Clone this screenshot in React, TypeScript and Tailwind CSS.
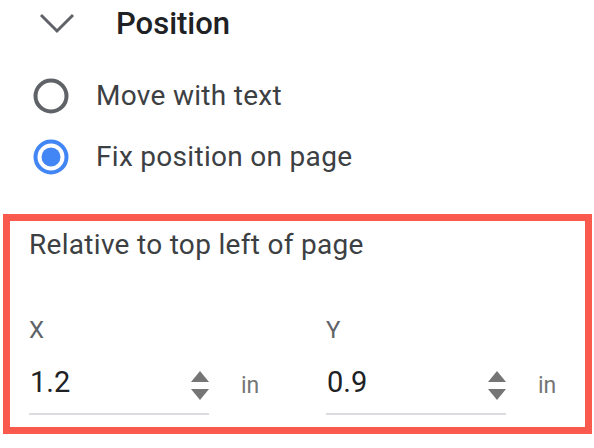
import React, { useState } from 'react';

function Radio({ checked }: { checked: boolean }) {
  return (
    <svg width="36" height="36" viewBox="0 0 36 36" className="shrink-0">
      <circle cx="18" cy="18" r="15.5" fill="none" stroke={checked ? '#4285f4' : '#5f6368'} strokeWidth="4" />
      {checked && <circle cx="18" cy="18" r="9.5" fill="#4285f4" />}
    </svg>
  );
}

function Spinner() {
  return (
    <svg width="18" height="30" viewBox="0 0 18 30" className="shrink-0 mt-[7px]">
      <path d="M9 0 L18 11 L0 11 Z" fill="#757575" />
      <path d="M0 18 L18 18 L9 29 Z" fill="#757575" />
    </svg>
  );
}

function NumberField({ label, value }: { label: string; value: string }) {
  return (
    <div className="flex flex-col">
      <div className="text-[24px] leading-none text-[#5f6368] h-[24px]">{label}</div>
      <div className="flex items-start mt-[24px]">
        <div className="w-[180px] h-[49px] pb-[15px] border-b-2 border-[#dadce0] flex items-center justify-between">
          <span className="text-[29px] leading-none text-[#202124] ml-[1px]">{value}</span>
          <Spinner />
        </div>
        <span className="text-[23px] leading-none text-[#757575] ml-[32px] mt-[8px]">in</span>
      </div>
    </div>
  );
}

export default function App() {
  const [fixed, setFixed] = useState(true);

  return (
    <div className="w-[594px] h-[448px] bg-white overflow-hidden font-['Roboto','Liberation_Sans',sans-serif]">
      <div className="flex items-center h-[46px] pl-[39px]">
        <svg width="36" height="22" viewBox="0 0 36 22" className="shrink-0">
          <path d="M2 3 L18 19 L34 3" fill="none" stroke="#5f6368" strokeWidth="3" />
        </svg>
        <span className="ml-[41px] text-[31px] leading-none font-medium text-[#202124]">Position</span>
      </div>

      <div className="flex flex-col gap-[13px] mt-[26px] pl-[33px]">
        <button onClick={() => setFixed(false)} className="flex items-center h-[48px] text-left">
          <Radio checked={!fixed} />
          <span className="ml-[27px] text-[28px] leading-none tracking-[0.3px] text-[#3c4043]">Move with text</span>
        </button>
        <button onClick={() => setFixed(true)} className="flex items-center h-[48px] text-left">
          <Radio checked={fixed} />
          <span className="ml-[27px] text-[28px] leading-none tracking-[0.3px] text-[#3c4043]">Fix position on page</span>
        </button>
      </div>

      <div className="mt-[33px] ml-[3px] w-[589px] border-[7px] border-[#fa5a4d] pl-[19px] pt-[10px] pb-[12px]">
        <div className="text-[28px] leading-none tracking-[0.3px] text-[#3c4043] h-[28px]">Relative to top left of page</div>
        <div className="flex mt-[59px]">
          <div className="w-[297px]">
            <NumberField label="X" value="1.2" />
          </div>
          <NumberField label="Y" value="0.9" />
        </div>
      </div>
    </div>
  );
}
